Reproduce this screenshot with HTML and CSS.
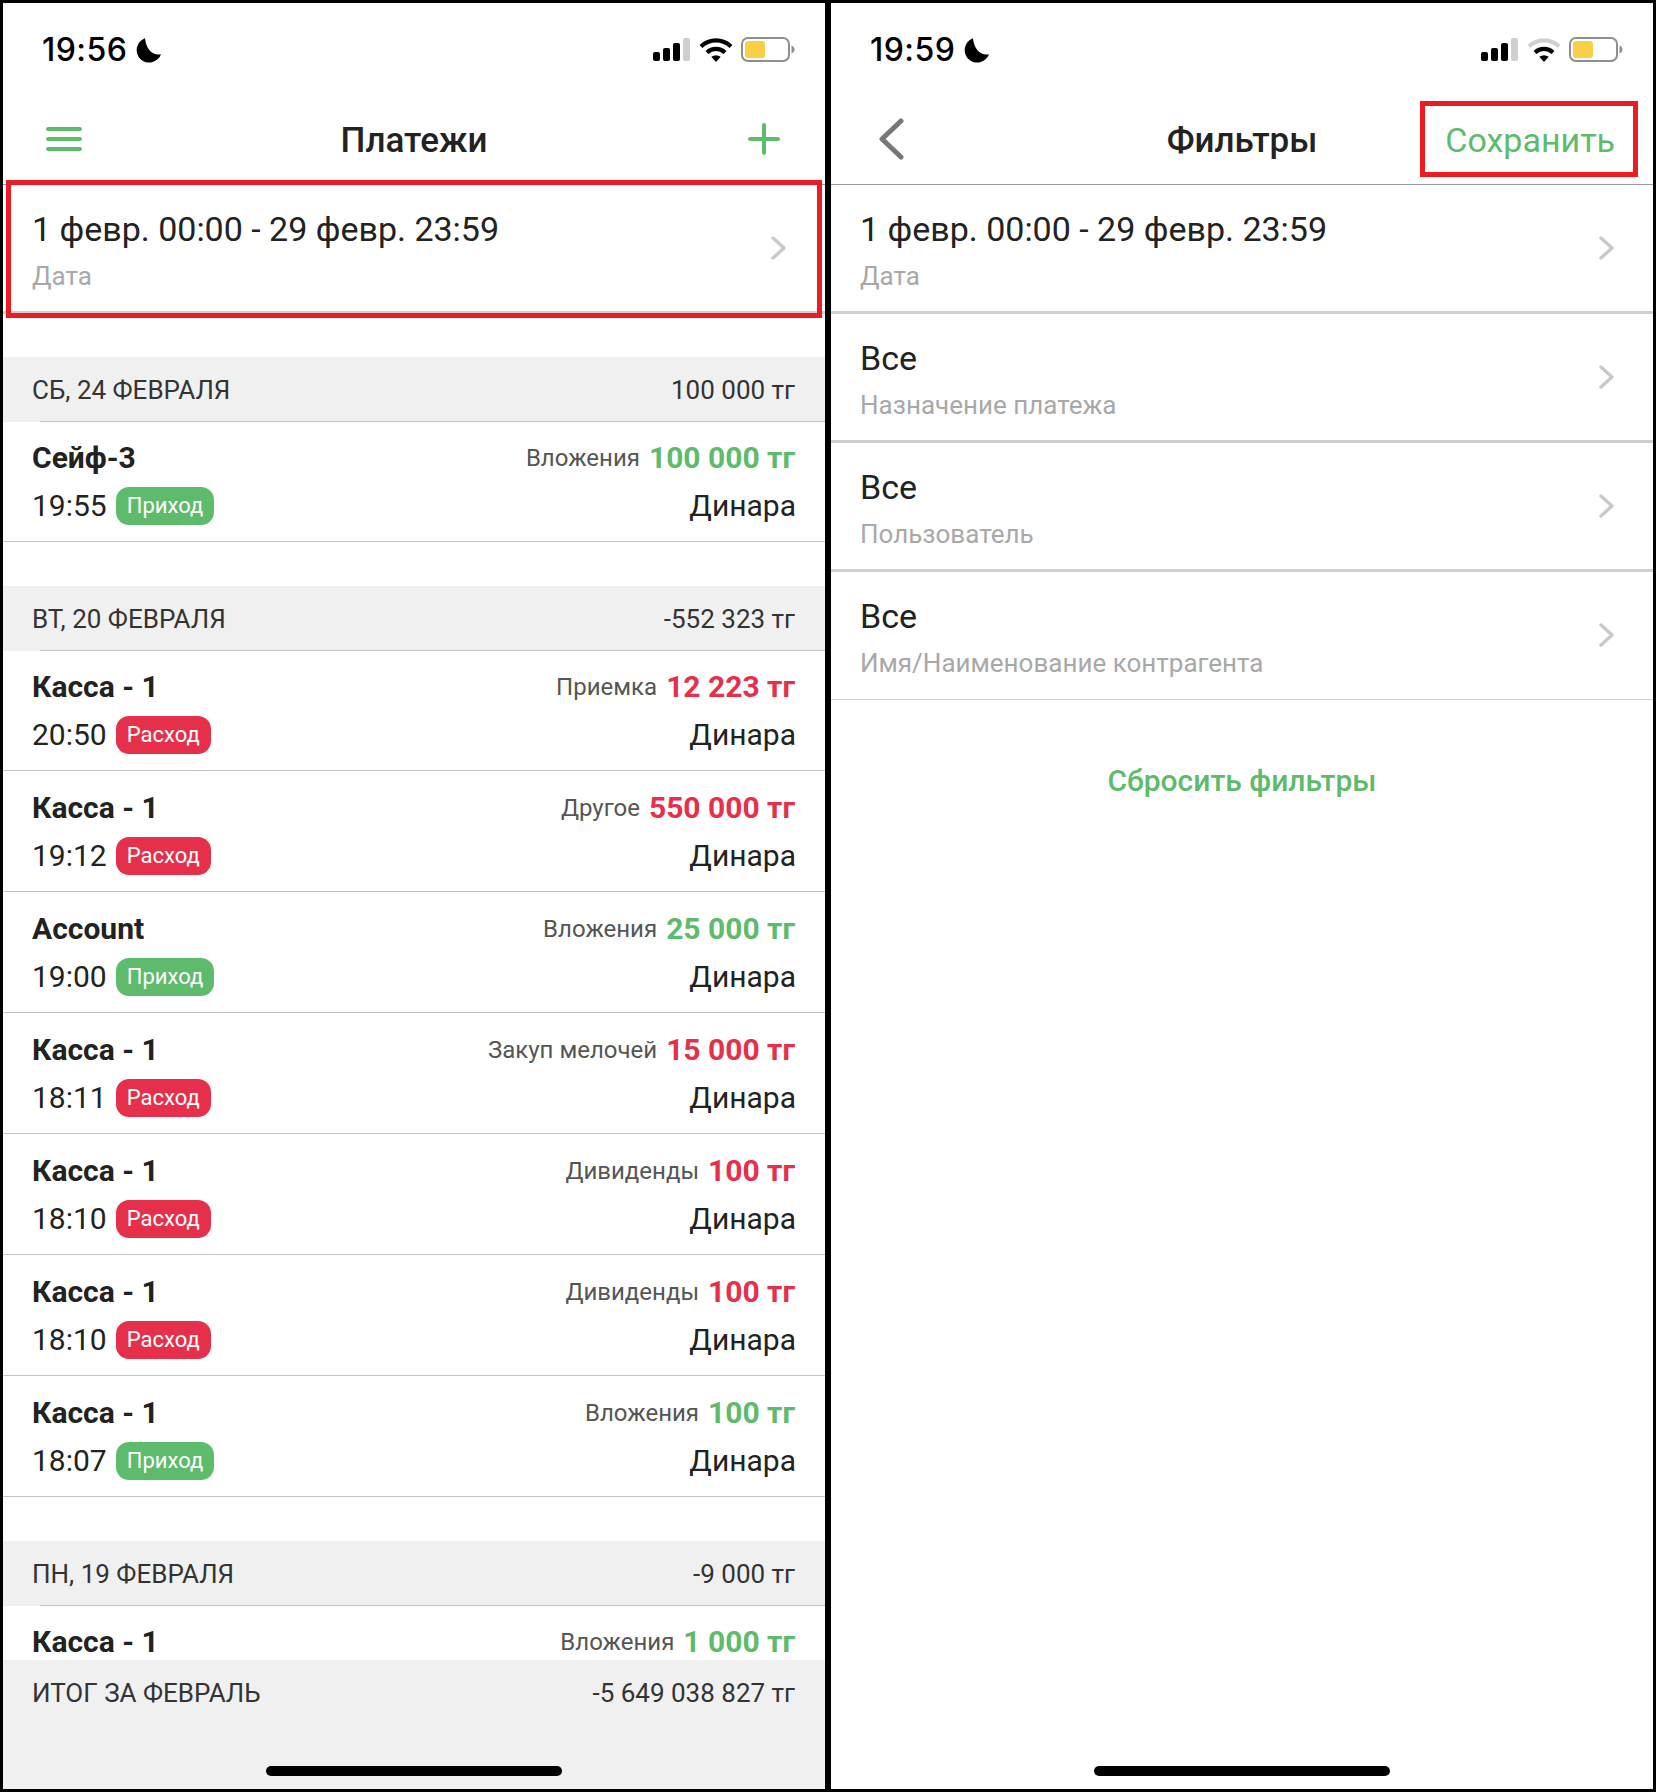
FILE: index.html
```html
<!DOCTYPE html>
<html lang="ru">
<head>
<meta charset="utf-8">
<title>Платежи и фильтры</title>
<link rel="stylesheet" href="styles.css">
</head>
<body>
<svg class="defs" width="0" height="0" aria-hidden="true">
  <symbol id="moon" viewBox="0 0 24 24"><path d="M8.600 .8A12 12 0 1 0 24 16C17 17.500 10 13 8.600 .8Z"/></symbol>
  <symbol id="chev" viewBox="0 0 15 24"><path d="M2 2 13 12 2 22" fill="none" stroke="#c9c9c9" stroke-width="3.400" stroke-linecap="round" stroke-linejoin="round"/></symbol>
  <symbol id="battery" viewBox="0 0 54 25"><rect x="1" y="1" width="47" height="23" rx="6" fill="#fff" stroke="#8e8e8e" stroke-width="2"/><rect x="4" y="4" width="20" height="17" rx="3" fill="#f8cf45"/><path d="M50.500 8.500c2 .8 3 2.200 3 4s-1 3.200-3 4Z" fill="#8e8e8e"/></symbol>
  <symbol id="bars" viewBox="0 0 37 23"><rect x="0" y="14" width="7" height="9" rx="2"/><rect x="10" y="10" width="7" height="13" rx="2"/><rect x="20" y="5" width="7" height="18" rx="2"/><rect x="30" y="0" width="7" height="23" rx="2" fill="#cfcfcf"/></symbol>
</svg>

<main class="screens">
  <section class="phone">
    <header class="status">
      <div class="clock">19:56<svg class="moon"><use href="#moon"/></svg></div>
      <div class="indicators">
        <svg class="bars"><use href="#bars"/></svg>
        <svg class="wifi" viewBox="0 0 34 24"><path class="arc" d="M2 8.500A21.500 21.500 0 0 1 32 8.500"/><path class="arc" d="M8 14.500A13 13 0 0 1 26 14.500"/><path d="M12.300 18.800 17 24 21.700 18.800Q17 15.800 12.300 18.800Z"/></svg>
        <svg class="battery"><use href="#battery"/></svg>
      </div>
    </header>
    <nav class="nav">
      <svg class="icon-menu" viewBox="0 0 36 24"><path d="M2 2H34M2 12H34M2 22H34"/></svg>
      <h1 class="nav-title">Платежи</h1>
      <svg class="icon-plus" viewBox="0 0 32 32"><path d="M16 2V30M2 16H30"/></svg>
    </nav>
    <div class="filter-row date-row">
      <div><div class="filter-value">1 февр. 00:00 - 29 февр. 23:59</div><div class="filter-label">Дата</div></div>
      <svg class="chev"><use href="#chev"/></svg>
    </div>
    <div class="list">
      <div class="day">
        <div class="day-head"><span>СБ, 24 ФЕВРАЛЯ</span><span>100 000 тг</span></div>
        <div class="pay">
          <div class="pay-line"><b class="acct">Сейф-3</b><span class="meta"><span class="cat">Вложения</span><b class="sum in">100 000 тг</b></span></div>
          <div class="pay-line"><span class="when">19:55<span class="tag in-bg">Приход</span></span><span class="who">Динара</span></div>
        </div>
      </div>
      <div class="day">
        <div class="day-head"><span>ВТ, 20 ФЕВРАЛЯ</span><span>-552 323 тг</span></div>
        <div class="pay">
          <div class="pay-line"><b class="acct">Касса - 1</b><span class="meta"><span class="cat">Приемка</span><b class="sum out">12 223 тг</b></span></div>
          <div class="pay-line"><span class="when">20:50<span class="tag out-bg">Расход</span></span><span class="who">Динара</span></div>
        </div>
        <div class="pay">
          <div class="pay-line"><b class="acct">Касса - 1</b><span class="meta"><span class="cat">Другое</span><b class="sum out">550 000 тг</b></span></div>
          <div class="pay-line"><span class="when">19:12<span class="tag out-bg">Расход</span></span><span class="who">Динара</span></div>
        </div>
        <div class="pay">
          <div class="pay-line"><b class="acct">Account</b><span class="meta"><span class="cat">Вложения</span><b class="sum in">25 000 тг</b></span></div>
          <div class="pay-line"><span class="when">19:00<span class="tag in-bg">Приход</span></span><span class="who">Динара</span></div>
        </div>
        <div class="pay">
          <div class="pay-line"><b class="acct">Касса - 1</b><span class="meta"><span class="cat">Закуп мелочей</span><b class="sum out">15 000 тг</b></span></div>
          <div class="pay-line"><span class="when">18:11<span class="tag out-bg">Расход</span></span><span class="who">Динара</span></div>
        </div>
        <div class="pay">
          <div class="pay-line"><b class="acct">Касса - 1</b><span class="meta"><span class="cat">Дивиденды</span><b class="sum out">100 тг</b></span></div>
          <div class="pay-line"><span class="when">18:10<span class="tag out-bg">Расход</span></span><span class="who">Динара</span></div>
        </div>
        <div class="pay">
          <div class="pay-line"><b class="acct">Касса - 1</b><span class="meta"><span class="cat">Дивиденды</span><b class="sum out">100 тг</b></span></div>
          <div class="pay-line"><span class="when">18:10<span class="tag out-bg">Расход</span></span><span class="who">Динара</span></div>
        </div>
        <div class="pay">
          <div class="pay-line"><b class="acct">Касса - 1</b><span class="meta"><span class="cat">Вложения</span><b class="sum in">100 тг</b></span></div>
          <div class="pay-line"><span class="when">18:07<span class="tag in-bg">Приход</span></span><span class="who">Динара</span></div>
        </div>
      </div>
      <div class="day">
        <div class="day-head"><span>ПН, 19 ФЕВРАЛЯ</span><span>-9 000 тг</span></div>
        <div class="pay">
          <div class="pay-line"><b class="acct">Касса - 1</b><span class="meta"><span class="cat">Вложения</span><b class="sum in">1 000 тг</b></span></div>
        </div>
      </div>
    </div>
    <footer class="total">
      <div class="total-line"><span>ИТОГ ЗА ФЕВРАЛЬ</span><span>-5 649 038 827 тг</span></div>
      <div class="home"></div>
    </footer>
    <div class="mark mark-date"></div>
  </section>

  <section class="phone">
    <header class="status">
      <div class="clock">19:59<svg class="moon"><use href="#moon"/></svg></div>
      <div class="indicators">
        <svg class="bars"><use href="#bars"/></svg>
        <svg class="wifi" viewBox="0 0 34 24"><path class="arc dim" d="M2 8.500A21.500 21.500 0 0 1 32 8.500"/><path class="arc" d="M8 14.500A13 13 0 0 1 26 14.500"/><path d="M12.300 18.800 17 24 21.700 18.800Q17 15.800 12.300 18.800Z"/></svg>
        <svg class="battery"><use href="#battery"/></svg>
      </div>
    </header>
    <nav class="nav">
      <svg class="icon-back" viewBox="0 0 26 42"><path d="M23 3 4 21 23 39"/></svg>
      <h1 class="nav-title">Фильтры</h1>
      <span class="save">Сохранить</span>
    </nav>
    <div class="filter-row">
      <div><div class="filter-value">1 февр. 00:00 - 29 февр. 23:59</div><div class="filter-label">Дата</div></div>
      <svg class="chev"><use href="#chev"/></svg>
    </div>
    <div class="filter-row">
      <div><div class="filter-value">Все</div><div class="filter-label">Назначение платежа</div></div>
      <svg class="chev"><use href="#chev"/></svg>
    </div>
    <div class="filter-row">
      <div><div class="filter-value">Все</div><div class="filter-label">Пользователь</div></div>
      <svg class="chev"><use href="#chev"/></svg>
    </div>
    <div class="filter-row filter-last">
      <div><div class="filter-value">Все</div><div class="filter-label">Имя/Наименование контрагента</div></div>
      <svg class="chev"><use href="#chev"/></svg>
    </div>
    <div class="reset">Сбросить фильтры</div>
    <div class="spacer"></div>
    <div class="home-wrap"><div class="home"></div></div>
    <div class="mark mark-save"></div>
  </section>
</main>
</body>
</html>
```

FILE: styles.css
```css
* { box-sizing: border-box; }
html, body { margin: 0; padding: 0; }
body {
  width: 1656px;
  height: 1792px;
  background: #000;
  font-family: Roboto, "Liberation Sans", sans-serif;
  color: #222;
  overflow: hidden;
}
.defs { position: absolute; }
.screens {
  display: flex;
  gap: 6px;
  height: 1792px;
  padding: 3px 0 3px 3px;
}
.phone {
  position: relative;
  width: 822px;
  height: 1786px;
  background: #fff;
  display: flex;
  flex-direction: column;
  overflow: hidden;
}

/* status bar */
.status {
  height: 97px;
  flex: none;
  display: flex;
  justify-content: space-between;
  padding: 31px 30px 0 39px;
}
.clock {
  display: flex;
  align-items: flex-start;
  gap: 9px;
  font-family: Inter, sans-serif;
  font-size: 32px;
  font-weight: 500;
  line-height: 32px;
  letter-spacing: 0.45px;
  color: #000;
  height: 32px;
}
.moon { width: 25px; height: 26px; margin-top: 3px; fill: #000; }
.indicators { display: flex; align-items: flex-start; padding-top: 2px; }
.bars { width: 37px; height: 23px; margin-top: 2px; fill: #000; }
.wifi { width: 34px; height: 24px; margin: 2px 0 0 9px; fill: #000; }
.wifi .arc { fill: none; stroke: #000; stroke-width: 4.200px; }
.wifi .arc.dim { stroke: #cfcfcf; }
.battery { width: 54px; height: 25px; margin: 1px 0 0 8px; }

/* nav bar */
.nav {
  height: 85px;
  flex: none;
  position: relative;
  display: flex;
  align-items: center;
  justify-content: space-between;
  border-bottom: 1px solid #9a9a9a;
  padding: 0 0 6px;
}
.nav-title {
  position: absolute;
  left: 0;
  right: 0;
  top: 19px;
  margin: 0;
  text-align: center;
  font-size: 35px;
  line-height: 44px;
  font-weight: 500;
  color: #222;
}
.icon-menu { width: 36px; height: 24px; margin-left: 43px; fill: none; stroke: #5dbb6b; stroke-width: 4px; stroke-linecap: round; }
.icon-plus { width: 32px; height: 32px; margin-right: 45px; fill: none; stroke: #5dbb6b; stroke-width: 4px; stroke-linecap: round; }
.icon-back { width: 26px; height: 42px; margin-left: 47px; fill: none; stroke: #777; stroke-width: 5px; stroke-linecap: round; stroke-linejoin: round; }
.save { font-size: 34px; line-height: 44px; color: #5dbb6b; margin: 2px 38px 0 0; position: relative; z-index: 1; }

/* filter rows */
.filter-row {
  height: 129px;
  flex: none;
  display: flex;
  align-items: center;
  justify-content: space-between;
  padding: 0 39px 0 29px;
  border-bottom: 3px solid #cfcfcf;
}
.filter-row.filter-last { height: 128px; border-bottom-width: 1px; padding-bottom: 1px; }
.filter-row > div:first-child { padding-top: 2px; }
.filter-value { font-size: 34px; line-height: 44px; color: #222; }
.filter-label { font-size: 26px; line-height: 30px; margin-top: 10px; color: #a8a8a8; }
.chev { width: 15px; height: 24px; }
.reset {
  margin-top: 63px;
  text-align: center;
  font-size: 30px;
  line-height: 36px;
  font-weight: 500;
  color: #5dbb6b;
}
.spacer { flex: 1; }

/* payment list */
.list { flex: 1; min-height: 0; overflow: hidden; }
.day { margin-top: 43px; }
.day-head {
  height: 65px;
  display: flex;
  align-items: center;
  justify-content: space-between;
  padding: 0 30px 0 29px;
  background: #f0f0f0;
  font-size: 26px;
  color: #333;
  position: relative;
}
.day-head::after {
  content: "";
  position: absolute;
  left: 37px;
  right: 0;
  bottom: 0;
  border-bottom: 1px solid #c4c4c4;
}
.pay {
  height: 121px;
  padding: 11px 30px 0 29px;
  background: linear-gradient(#c4c4c4, #c4c4c4) 0 calc(100% - 1px) / 100% 1px no-repeat;
}
.pay-line {
  display: flex;
  justify-content: space-between;
  align-items: center;
  height: 48px;
}
.acct { font-size: 30px; font-weight: 700; color: #222; }
.meta { display: flex; align-items: center; gap: 9px; }
.cat { font-size: 24px; color: #555; margin-top: 2px; }
.sum { font-size: 30px; font-weight: 700; }
.in { color: #5dbb6b; }
.out { color: #e6304b; }
.when { display: flex; align-items: center; font-size: 30px; color: #222; }
.tag {
  margin: 2px 0 0 9px;
  height: 38px;
  padding: 0 11px 2px;
  border-radius: 13px;
  display: flex;
  align-items: center;
  font-size: 22px;
  color: #fff;
}
.in-bg { background: #5dbb6b; }
.out-bg { background: #e6304b; }
.who { font-size: 30px; color: #222; margin-right: -1px; }

/* footer */
.total {
  flex: none;
  height: 129px;
  background: #f0f0f0;
  padding-top: 16px;
  display: flex;
  flex-direction: column;
  align-items: center;
}
.total-line {
  align-self: stretch;
  display: flex;
  justify-content: space-between;
  padding: 0 30px 0 29px;
  font-size: 26px;
  line-height: 34px;
  color: #333;
}
.home {
  width: 296px;
  height: 10px;
  border-radius: 5px;
  background: #000;
  margin-top: 56px;
}
.home-wrap { flex: none; display: flex; justify-content: center; padding-bottom: 13px; }
.home-wrap .home { margin-top: 0; }

/* annotation frames */
.mark { position: absolute; border: 5px solid #ed1c24; pointer-events: none; }
.mark-date { left: 3px; top: 177px; width: 816px; height: 138px; }
.mark-save { left: 589px; top: 98px; width: 218px; height: 76px; }
```
